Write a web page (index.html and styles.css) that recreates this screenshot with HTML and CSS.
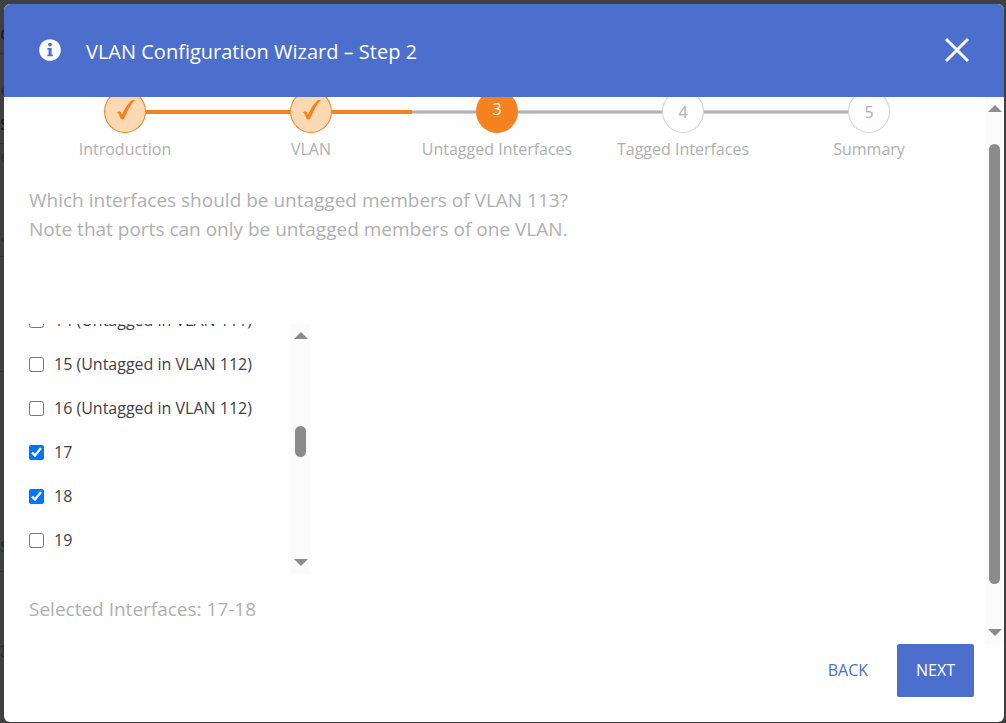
FILE: index.html
```html
<!DOCTYPE html>
<html lang="en">
<head>
    <meta charset="UTF-8">
    <meta name="viewport" content="width=device-width, initial-scale=1.0">
    <title>VLAN Configuration Wizard</title>
    <link rel="stylesheet" href="styles.css">
</head>
<body>
    <!-- dimmed page edge behind the dialog -->
    <div class="backdrop" aria-hidden="true">
        <span class="bold ruled">c</span>
        <span>e</span>
        <span class="bold ruled">s</span>
        <span>e</span>
        <span class="ruled">a</span>
        <span class="ruled">t</span>
        <span class="link ruled">s</span>
        <span class="ruled">r</span>
        <span>g</span>
    </div>

    <div class="wizard" role="dialog" aria-labelledby="wizardTitle">
        <header class="wizard-header">
            <svg class="info-icon" viewBox="0 0 22 22" aria-hidden="true">
                <circle cx="11" cy="11" r="10.8" fill="#fff"/>
                <circle cx="11" cy="5.6" r="1.9" fill="#4c6fcd"/>
                <path d="M8.4 9h4.2v6.400h1.200v1.800H8.400v-1.800h1.200v-4.600H8.400z" fill="#4c6fcd"/>
            </svg>
            <h1 class="wizard-title" id="wizardTitle">VLAN Configuration Wizard – Step 2</h1>
            <button type="button" class="close" aria-label="Close">
                <svg viewBox="0 0 24 24" aria-hidden="true">
                    <path d="M1 1L23 23M23 1L1 23" stroke="#fff" stroke-width="3" fill="none"/>
                </svg>
            </button>
        </header>

        <div class="wizard-body">
            <main class="content">
                <ol class="stepper">
                    <li class="step done first">
                        <div class="track">
                            <span class="line"></span>
                            <span class="circle">
                                <svg class="tick" viewBox="0 0 18 20" aria-hidden="true">
                                    <path d="M0 12.5C1.5 10.5 3.5 10.5 5 14.5C7.5 9 10.5 4 14 .8C15 0 16.5 0 18 0C13.5 5 10.5 10.5 7.8 17.5C6.8 20 4 20 3.2 18C2.3 15 1.5 13.5 0 12.5Z" fill="#f58220"/>
                                </svg>
                            </span>
                            <span class="line"></span>
                        </div>
                        <span class="label">Introduction</span>
                    </li>
                    <li class="step done">
                        <div class="track">
                            <span class="line"></span>
                            <span class="circle">
                                <svg class="tick" viewBox="0 0 18 20" aria-hidden="true">
                                    <path d="M0 12.5C1.5 10.5 3.5 10.5 5 14.5C7.5 9 10.5 4 14 .8C15 0 16.5 0 18 0C13.5 5 10.5 10.5 7.8 17.5C6.8 20 4 20 3.2 18C2.3 15 1.5 13.5 0 12.5Z" fill="#f58220"/>
                                </svg>
                            </span>
                            <span class="line"></span>
                        </div>
                        <span class="label">VLAN</span>
                    </li>
                    <li class="step active">
                        <div class="track">
                            <span class="line"></span>
                            <span class="circle">3</span>
                            <span class="line"></span>
                        </div>
                        <span class="label">Untagged Interfaces</span>
                    </li>
                    <li class="step">
                        <div class="track">
                            <span class="line"></span>
                            <span class="circle">4</span>
                            <span class="line"></span>
                        </div>
                        <span class="label">Tagged Interfaces</span>
                    </li>
                    <li class="step last">
                        <div class="track">
                            <span class="line"></span>
                            <span class="circle">5</span>
                            <span class="line"></span>
                        </div>
                        <span class="label">Summary</span>
                    </li>
                </ol>

                <p class="question">Which interfaces should be untagged members of VLAN 113?<br>Note that ports can only be untagged members of one VLAN.</p>

                <div class="interfaces">
                    <div class="interface-list">
                        <label class="interface"><input type="checkbox"> 14 (Untagged in VLAN 111)</label>
                        <label class="interface"><input type="checkbox"> 15 (Untagged in VLAN 112)</label>
                        <label class="interface"><input type="checkbox"> 16 (Untagged in VLAN 112)</label>
                        <label class="interface"><input type="checkbox" checked> 17</label>
                        <label class="interface"><input type="checkbox" checked> 18</label>
                        <label class="interface"><input type="checkbox"> 19</label>
                    </div>
                    <div class="scrollbar list-scrollbar" aria-hidden="true">
                        <span class="arrow up"></span>
                        <span class="rail"><span class="thumb"></span></span>
                        <span class="arrow down"></span>
                    </div>
                </div>

                <p class="selected">Selected Interfaces: 17-18</p>
            </main>
            <div class="scrollbar body-scrollbar" aria-hidden="true">
                <span class="arrow up"></span>
                <span class="rail"><span class="thumb"></span></span>
                <span class="arrow down"></span>
            </div>
        </div>

        <footer class="wizard-footer">
            <button type="button" class="btn btn-back">BACK</button>
            <button type="button" class="btn btn-next">NEXT</button>
        </footer>
    </div>
</body>
</html>
```

FILE: styles.css
```css
* {
    box-sizing: border-box;
}

body {
    display: flex;
    margin: 0;
    height: 100vh;
    padding: 4px 2px 1px 0;
    background-color: #403f3f;
    font-family: "Open Sans", "Noto Sans", sans-serif;
    font-size: 16px;
    color: #3e4148;
}

/* Backdrop */
.backdrop {
    display: grid;
    grid-template-rows: 50px 56px 34px 32px 81px 115px 200px 75px 20px;
    width: 4px;
    overflow: hidden;
    color: #2c2b2b;
}

.backdrop span {
    display: flex;
    align-items: flex-end;
    justify-content: flex-end;
    padding-bottom: 8px;
    line-height: 24px;
}

.backdrop .ruled {
    border-bottom: 1px solid #333;
}

.backdrop .bold {
    font-size: 20px;
    color: #15171c;
}

.backdrop .link {
    font-size: 20px;
    padding-bottom: 14px;
    color: #10293c;
}

.wizard {
    display: flex;
    flex: 1;
    flex-direction: column;
    height: 100%;
    border-radius: 6px;
    background-color: #fefefe;
    overflow: hidden;
}

/* Header */
.wizard-header {
    display: flex;
    align-items: center;
    padding: 31px 35px;
    background-color: #4c6fcd;
    color: white;
}

.info-icon {
    width: 22px;
    height: 22px;
    margin: 0 25px 2px 0;
}

.wizard-title {
    flex: 1;
    margin: 0;
    padding-top: 2px;
    font-size: 20px;
    line-height: 29px;
    font-weight: 400;
}

.close {
    display: flex;
    margin-bottom: 2px;
    padding: 0;
    border: none;
    background: none;
    cursor: pointer;
}

.close svg {
    width: 24px;
    height: 24px;
}

/* Body */
.wizard-body {
    display: flex;
    flex: 1;
    min-height: 0;
    overflow: hidden;
}

.content {
    flex: 1;
    min-width: 0;
    padding: 0 23px 0 25px;
}

/* Stepper, scrolled partly under the header */
.stepper {
    display: flex;
    margin: -7px 0 0 3px;
    padding: 0;
    list-style: none;
}

.step {
    flex: 1;
    text-align: center;
    color: #b0b0b0;
}

.track {
    display: flex;
    align-items: center;
}

.line {
    flex: 1;
    height: 4px;
    border: solid #d4d4d4;
    border-width: 1px 0;
    background-color: #b0b0b0;
}

.circle {
    display: flex;
    align-items: center;
    justify-content: center;
    width: 42px;
    height: 43px;
    border: 1px solid #d4d4d4;
    border-radius: 50%;
    line-height: 24px;
}

.done .line {
    border-color: #f58220;
    background-color: #f58220;
}

.first .line:first-child,
.last .line:last-child {
    visibility: hidden;
}

.done .circle {
    border-color: #f58220;
    background-color: #fdd9b3;
}

.tick {
    width: 18px;
    height: 20px;
    margin: 0 0 4px 2px;
}

/* the orange progress reaches a little into the active step */
.active .line:first-child {
    border: none;
    background: linear-gradient(to right, #f58220 8px, transparent 8px),
                linear-gradient(#d4d4d4 1px, #b0b0b0 1px, #b0b0b0 3px, #d4d4d4 3px);
}

.active .circle {
    padding-bottom: 5px;
    border-color: #f58220;
    background-color: #f58220;
    color: white;
}

.label {
    display: block;
    margin-top: 4px;
    line-height: 24px;
}

.question {
    margin: 25px 0 80px;
    font-size: 19px;
    line-height: 29px;
    color: #b0b0b0;
}

/* Interface list */
.interfaces {
    display: flex;
    width: 281px;
    height: 250px;
    overflow: hidden;
}

.interface-list {
    flex: 1;
    margin-top: -16px;
}

.interface {
    display: flex;
    align-items: center;
    height: 24px;
    margin-bottom: 20px;
    line-height: 24px;
    cursor: pointer;
}

.interface input {
    width: 15px;
    height: 15px;
    margin: 0 10px 0 0;
    accent-color: #0075ff;
}

.selected {
    margin: 21px 0 0;
    font-size: 19px;
    line-height: 29px;
    color: #b0b0b0;
}

/* Scrollbars */
.scrollbar {
    display: flex;
    flex-direction: column;
    align-items: center;
    width: 19px;
    background-color: #fbfbfb;
}

.arrow {
    border: solid transparent;
    border-width: 0 7px;
}

.arrow.up {
    margin-top: 8px;
    border-bottom: 7px solid #8b8b8b;
}

.arrow.down {
    margin-bottom: 8px;
    border-top: 7px solid #8b8b8b;
}

.rail {
    flex: 1;
}

.thumb {
    display: block;
    width: 11px;
    border-radius: 6px;
    background-color: #8b8b8b;
}

.body-scrollbar .thumb {
    height: 440px;
    margin-top: 32px;
}

.list-scrollbar .thumb {
    height: 31px;
    margin-top: 87px;
}

/* Footer */
.wizard-footer {
    display: flex;
    justify-content: flex-end;
    padding: 0 30px 25px;
}

.btn {
    height: 53px;
    padding: 0 19px 2px;
    border: none;
    border-radius: 2px;
    font-family: inherit;
    font-size: 16px;
    cursor: pointer;
}

.btn-back {
    margin-right: 10px;
    background: none;
    color: #4c6fcd;
}

.btn-next {
    background-color: #4c6fcd;
    color: white;
}
```
